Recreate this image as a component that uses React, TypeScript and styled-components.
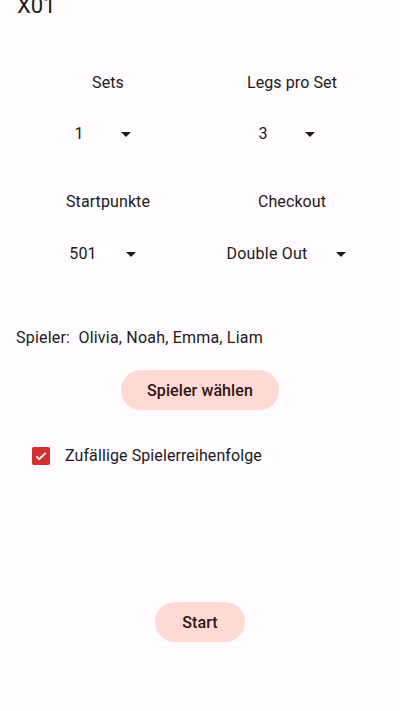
import React from "react";
import styled, { createGlobalStyle } from "styled-components";

const Global = createGlobalStyle`
  html, body { margin: 0; padding: 0; background: #FFFBFE; }
  body { font-family: Roboto, "Noto Sans", sans-serif; color: #201A1B; }
  #root { min-height: 711px; overflow: hidden; }
`;

const Page = styled.div`
  display: flex;
  flex-direction: column;
  height: 711px;
  overflow: hidden;
  background: #FFFBFE;
`;

const Title = styled.div`
  font-size: 22px;
  line-height: 28px;
  margin: -8px 0 0 17px;
  height: 28px;
`;

const Grid = styled.div<{ $top: number }>`
  display: grid;
  grid-template-columns: 1fr 1fr;
  padding: 0 16px;
  margin-top: ${(p) => p.$top}px;
`;

const Cell = styled.div`
  display: flex;
  flex-direction: column;
  align-items: center;
`;

const Label = styled.div`
  font-size: 16px;
  line-height: 24px;
  height: 24px;
  letter-spacing: 0.1px;
`;

const Dropdown = styled.div<{ $top: number }>`
  display: flex;
  align-items: center;
  height: 48px;
  margin-top: ${(p) => p.$top}px;
  margin-right: 4px;
`;

const DropText = styled.span`
  font-size: 16px;
  line-height: 24px;
  min-width: 39px;
  padding-right: 22px;
  box-sizing: border-box;
  letter-spacing: 0.2px;
`;

const Arrow = styled.svg`
  width: 24px;
  height: 24px;
  fill: #201A1B;
`;

const Players = styled.div`
  font-size: 16px;
  line-height: 24px;
  margin: 48px 0 0 16px;
  white-space: pre;
  letter-spacing: 0.2px;
`;

const PillButton = styled.button<{ $w: number; $top: number }>`
  align-self: center;
  width: ${(p) => p.$w}px;
  height: 40px;
  margin-top: ${(p) => p.$top}px;
  border: none;
  border-radius: 20px;
  background: #FFDAD4;
  color: #2C1512;
  font-family: Roboto, "Noto Sans", sans-serif;
  font-size: 16px;
  font-weight: 500;
  letter-spacing: 0.1px;
  padding: 0;
`;

const CheckRow = styled.label`
  display: flex;
  align-items: center;
  height: 48px;
  margin: 22px 0 0 32px;
  gap: 15px;
`;

const Box = styled.span`
  width: 18px;
  height: 18px;
  border-radius: 2px;
  background: #D32F2F;
  display: flex;
  align-items: center;
  justify-content: center;
`;

const CheckText = styled.span`
  font-size: 16px;
  line-height: 24px;
  letter-spacing: 0.1px;
`;

const Drop = ({ value, top }: { value: string; top: number }) => (
  <Dropdown $top={top}>
    <DropText>{value}</DropText>
    <Arrow viewBox="0 0 24 24">
      <path d="M7 10l5 5 5-5z" />
    </Arrow>
  </Dropdown>
);

export default function App() {
  return (
    <Page>
      <Global />
      <Title>X01</Title>
      <Grid $top={51}>
        <Cell>
          <Label>Sets</Label>
          <Drop value="1" top={15} />
        </Cell>
        <Cell>
          <Label>Legs pro Set</Label>
          <Drop value="3" top={15} />
        </Cell>
      </Grid>
      <Grid $top={32}>
        <Cell>
          <Label>Startpunkte</Label>
          <Drop value="501" top={16} />
        </Cell>
        <Cell>
          <Label>Checkout</Label>
          <Drop value="Double Out" top={16} />
        </Cell>
      </Grid>
      <Players>{"Spieler:  Olivia, Noah, Emma, Liam"}</Players>
      <PillButton $w={158} $top={20}>Spieler wählen</PillButton>
      <CheckRow>
        <Box>
          <svg width="14" height="14" viewBox="0 0 24 24">
            <path d="M4 12.5l5 5L20 6.5" fill="none" stroke="#fff" strokeWidth="3.2" />
          </svg>
        </Box>
        <CheckText>Zufällige Spielerreihenfolge</CheckText>
      </CheckRow>
      <PillButton $w={90} $top={122}>Start</PillButton>
    </Page>
  );
}
